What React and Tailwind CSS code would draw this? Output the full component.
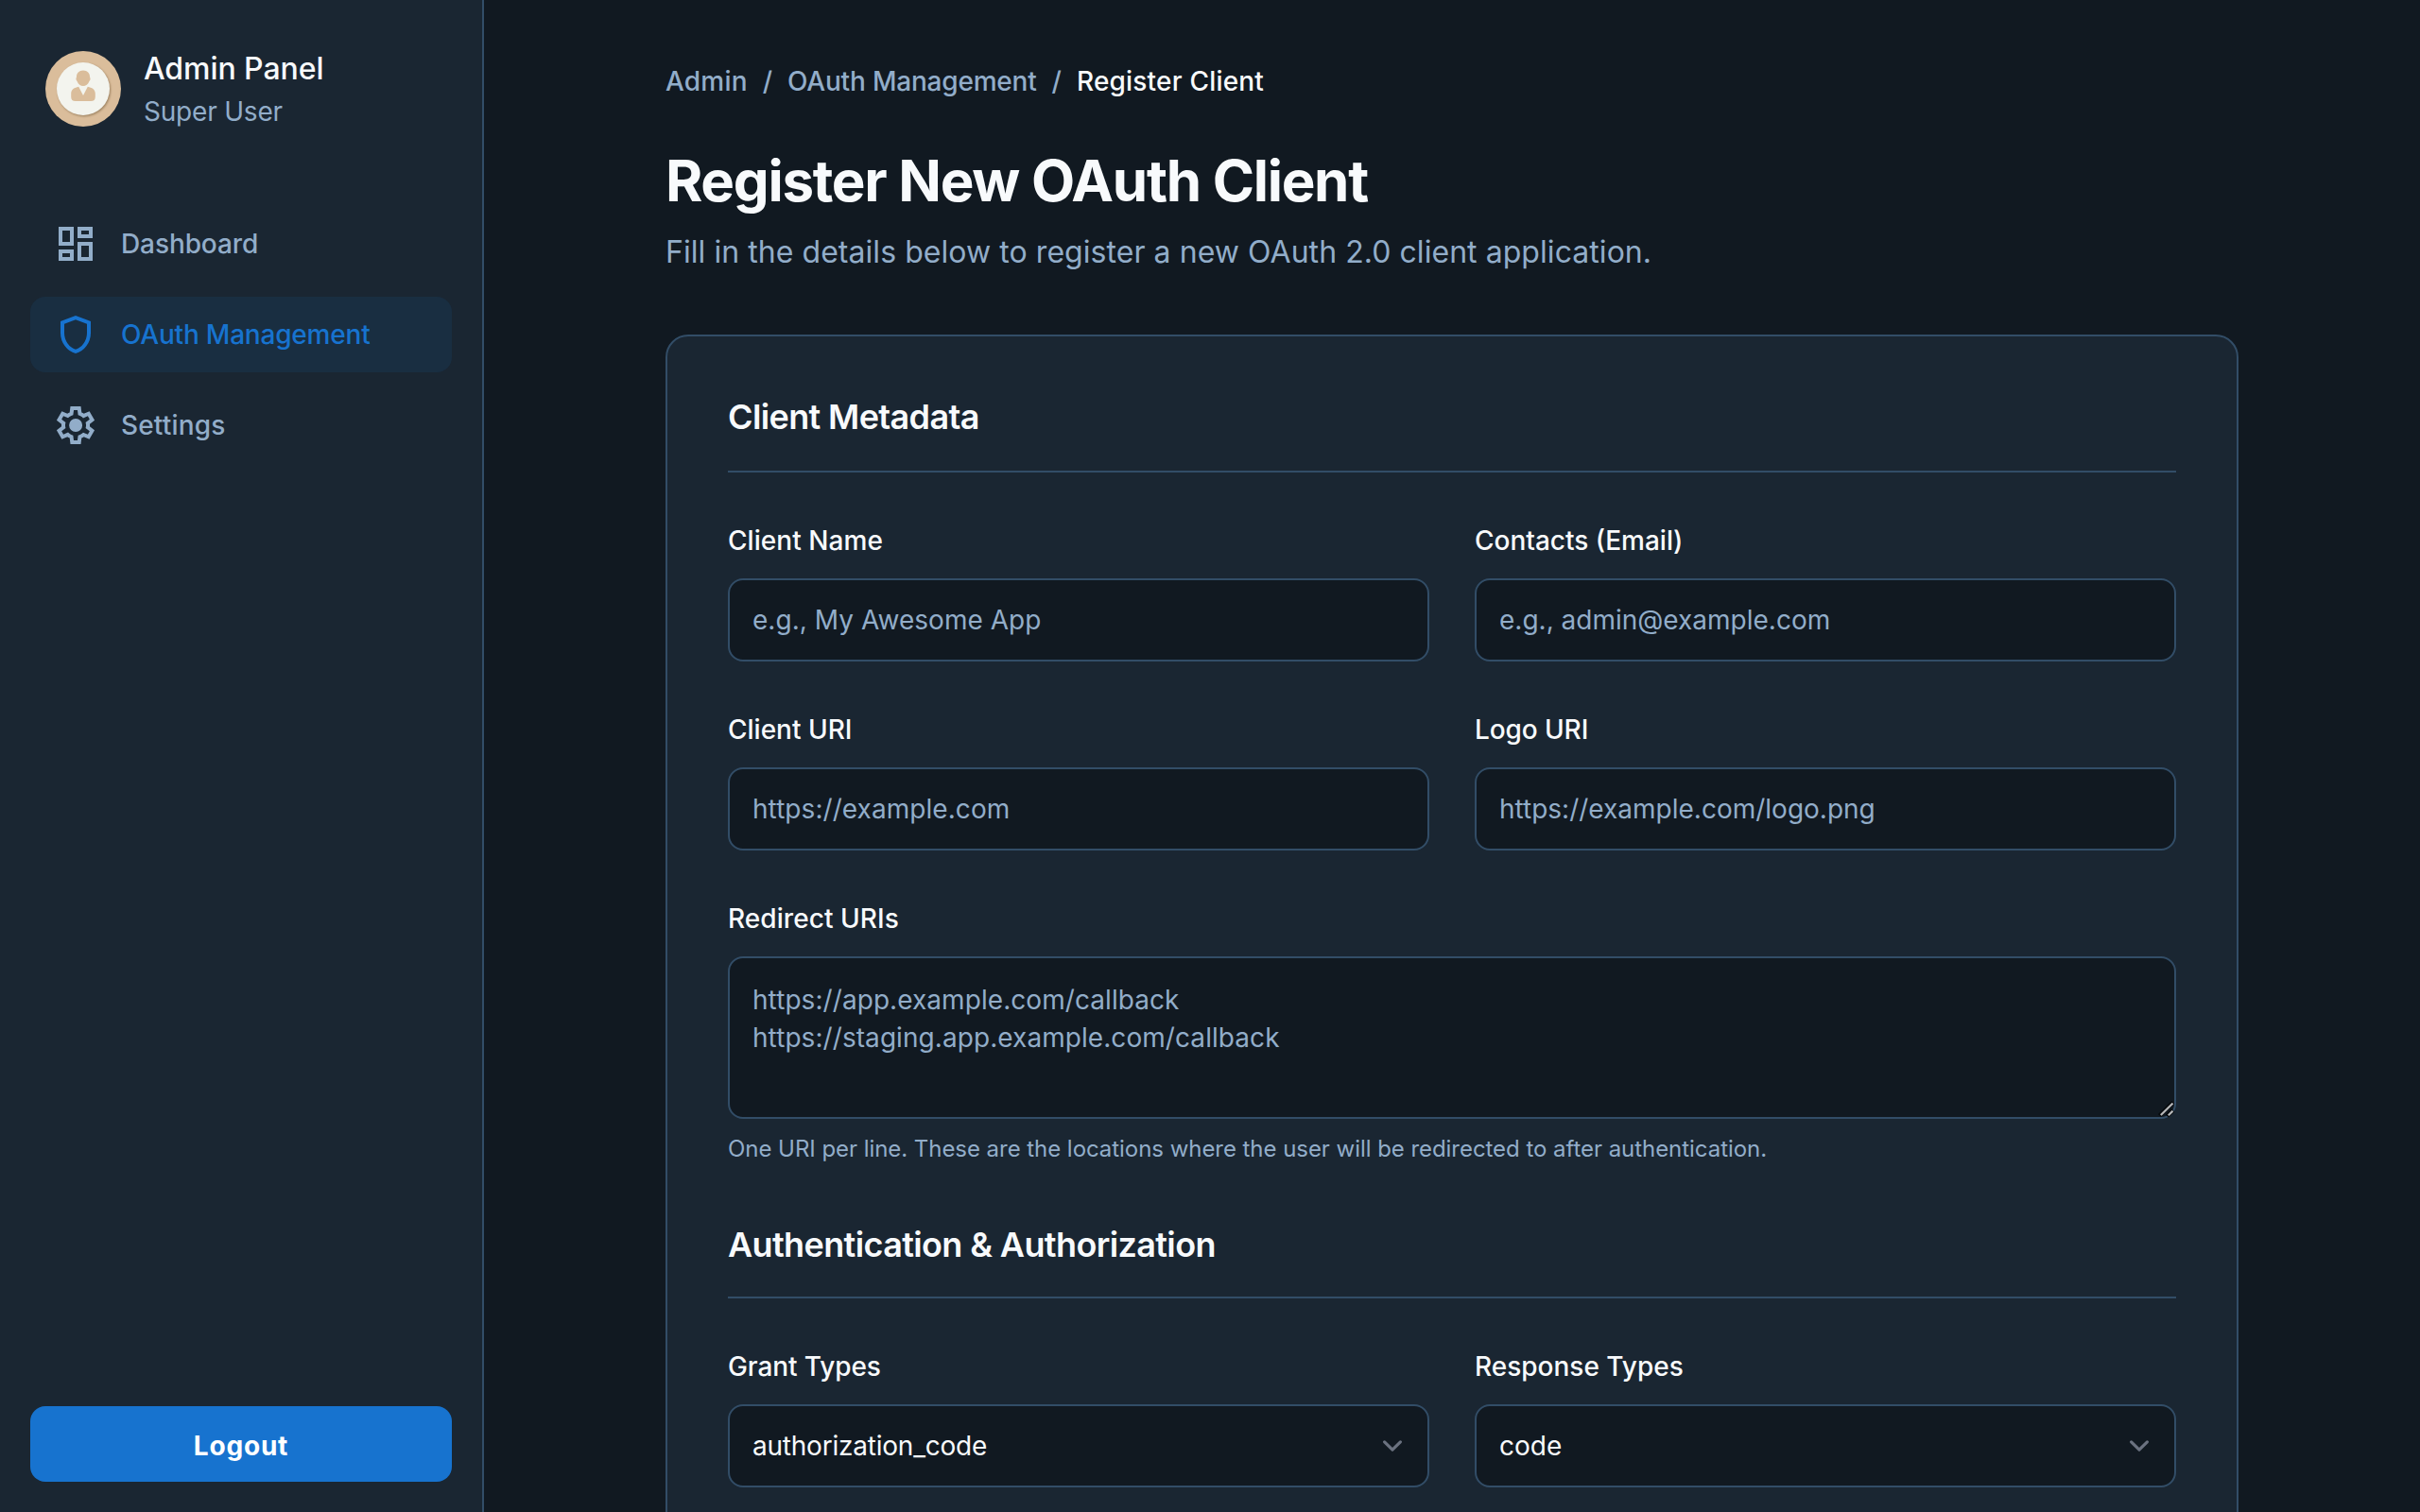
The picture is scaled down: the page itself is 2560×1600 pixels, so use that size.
const ICONS = {
  dashboard:
    'M19 5v2h-4V5h4M9 5v6H5V5h4m10 8v6h-4v-6h4M9 17v2H5v-2h4M21 3h-8v6h8V3zM11 3H3v10h8V3zm10 8h-8v10h8V11zm-10 4H3v6h8v-6z',
  shield:
    'M12 22q-3.475-.875-5.738-3.988T4 11.1V5l8-3 8 3v6.1q0 3.8-2.262 6.913T12 22zm0-2.1q2.6-.825 4.3-3.3t1.7-5.5V6.375l-6-2.25-6 2.25V11.1q0 3.025 1.7 5.5t4.3 3.3z',
  settings:
    'M9.25 22l-.4-3.2q-.325-.125-.612-.3t-.563-.375L4.7 19.375l-2.75-4.75 2.575-1.95Q4.5 12.5 4.5 12.338v-.675q0-.163.025-.338L1.95 9.375l2.75-4.75 2.975 1.25q.275-.2.575-.375t.6-.3l.4-3.2h5.5l.4 3.2q.325.125.613.3t.562.375l2.975-1.25 2.75 4.75-2.575 1.95q.025.175.025.338v.674q0 .163-.05.338l2.575 1.95-2.75 4.75-2.95-1.25q-.275.2-.575.375t-.6.3l-.4 3.2zm1.75-2h1.975l.35-2.65q.775-.2 1.438-.587t1.212-.938l2.475 1.025.975-1.7-2.15-1.625q.125-.35.175-.737T17.5 12t-.05-.787-.175-.738l2.15-1.625-.975-1.7-2.475 1.05q-.55-.575-1.212-.962t-1.438-.588L13 4h-1.975l-.35 2.65q-.775.2-1.437.588t-1.213.937L5.55 7.15l-.975 1.7 2.15 1.6q-.125.375-.175.75t-.05.8q0 .4.05.775t.175.75l-2.15 1.625.975 1.7 2.475-1.05q.55.575 1.213.963t1.437.587zm1.05-4.5q1.45 0 2.475-1.025T15.55 12t-1.025-2.475T12.05 8.5q-1.475 0-2.488 1.025T8.55 12t1.013 2.475T12.05 15.5z',
};

const field =
  'block w-full rounded-2xl border-2 border-[#324d67] bg-[#111921] px-6 text-[28px] text-[#f8fafc] placeholder:text-[#92adc9] placeholder:opacity-100 outline-none';

function NavItem({ icon, label, active, tracking }) {
  return (
    <a
      className={
        active
          ? 'flex h-20 items-center gap-6 rounded-2xl bg-[#1773cf]/10 px-6 text-[#1773cf]'
          : 'flex h-20 items-center gap-6 rounded-2xl px-6 text-[#92adc9]'
      }
    >
      <svg viewBox="0 0 24 24" className="size-12 shrink-0" fill="currentColor">
        <path d={ICONS[icon]} />
      </svg>
      <span className={`text-[28px] leading-[42px] font-medium ${tracking}`}>{label}</span>
    </a>
  );
}

function Avatar() {
  return (
    <svg viewBox="0 0 80 80" className="size-20 shrink-0">
      <defs>
        <filter id="soft" x="-20%" y="-20%" width="140%" height="140%">
          <feGaussianBlur stdDeviation="1" />
        </filter>
      </defs>
      <circle cx="40" cy="40" r="40" fill="#dabd9b" />
      <circle cx="41" cy="41.2" r="28" fill="#8f7553" opacity=".8" filter="url(#soft)" />
      <circle cx="40" cy="40" r="28" fill="#f3f4ee" />
      <path d="M40 20.500c4.500 0 7 3 7 6.500 0 1 .800 1.800.500 3-.200 1-.900 1.400-1.200 2.200-1 3-3.600 4.800-6.300 4.800s-5.300-1.800-6.300-4.800c-.300-.800-1-1.200-1.200-2.200-.300-1.200.500-2 .500-3 0-3.500 2.500-6.500 7-6.500z" fill="#dabd9b" />
      <path d="M35.200 37.700L40 47l4.800-9.300c4.500 1 8 2.800 8 7.300v3.500c0 3-1.600 4.500-4.600 4.500H31.800c-3 0-4.600-1.500-4.600-4.500V45c0-4.500 3.500-6.300 8-7.300z" fill="#dabd9b" />
    </svg>
  );
}

function Field({ label, tracking = '', children }) {
  return (
    <label className="flex flex-col gap-5">
      <span className={`text-[28px] leading-10 font-medium text-[#f8fafc] ${tracking}`}>{label}</span>
      {children}
    </label>
  );
}

function TextInput({ label, placeholder, tracking, inputTracking = '' }) {
  return (
    <Field label={label} tracking={tracking}>
      <input className={`${field} h-[88px] ${inputTracking}`} placeholder={placeholder} />
    </Field>
  );
}

function SelectInput({ label, value, tracking, valueTracking = '' }) {
  return (
    <Field label={label} tracking={tracking}>
      <div className={`${field} flex h-[88px] items-center justify-between`}>
        <span className={valueTracking}>{value}</span>
        <svg viewBox="0 0 20 20" className="-mr-2 size-[42px]" fill="none" stroke="#6b7280" strokeWidth="1.5" strokeLinecap="round" strokeLinejoin="round">
          <path d="M6 8l4 4 4-4" />
        </svg>
      </div>
    </Field>
  );
}

function SectionTitle({ className, children }) {
  return (
    <h2 className={`border-b-2 border-[#324d67] text-[36px] font-semibold tracking-[-0.63px] text-[#f8fafc] ${className}`}>
      {children}
    </h2>
  );
}

export default function App() {
  return (
    <div className="flex h-[1600px] w-[2560px] overflow-hidden bg-[#111921] font-['Inter',sans-serif] [font-optical-sizing:none]">
      <aside className="flex w-[512px] shrink-0 flex-col border-r-2 border-[#324d67] bg-[#1a2632] p-8">
        <div className="flex h-[124px] items-center gap-6 px-4">
          <Avatar />
          <div className="flex flex-col">
            <h1 className="text-[32px] leading-[48px] font-medium tracking-[-0.07px] text-[#f8fafc]">Admin Panel</h1>
            <p className="text-[28px] leading-[42px] tracking-[-0.2px] text-[#92adc9]">Super User</p>
          </div>
        </div>
        <nav className="mt-[62px] flex flex-col gap-4">
          <NavItem icon="dashboard" label="Dashboard" tracking="tracking-[-0.1px]" />
          <NavItem icon="shield" label="OAuth Management" tracking="tracking-[-0.2px]" active />
          <NavItem icon="settings" label="Settings" tracking="tracking-[0.16px]" />
        </nav>
        <button className="mt-auto h-20 rounded-2xl bg-[#1773cf] pt-1 text-[28px] font-bold tracking-[0.8px] text-white">
          Logout
        </button>
      </aside>

      <main className="flex-1 overflow-hidden">
        <div className="mx-auto w-[1664px] pt-[65px]">
          <div className="flex gap-4 text-[28px] leading-[42px] font-medium text-[#92adc9]">
            <span className="tracking-[0.2px]">Admin</span>
            <span>/</span>
            <span className="tracking-[-0.2px]">OAuth Management</span>
            <span>/</span>
            <span className="tracking-[0.2px] text-[#f8fafc]">Register Client</span>
          </div>
          <h1 className="mt-[47px] text-[60px] leading-[75px] font-bold tracking-[-1.3px] text-[#f8fafc]">
            Register New OAuth Client
          </h1>
          <p className="mt-[14px] text-[32px] leading-[48px] tracking-[0.055px] text-[#92adc9]">
            Fill in the details below to register a new OAuth 2.0 client application.
          </p>

          <form className="mt-[63px] h-[1500px] rounded-3xl border-2 border-[#324d67] bg-[#1a2632] p-16">
            <SectionTitle className="pb-9 leading-[42px]">Client Metadata</SectionTitle>
            <div className="mt-[52px] grid grid-cols-2 gap-x-12 gap-y-[52px]">
              <TextInput label="Client Name" placeholder="e.g., My Awesome App" tracking="tracking-[0.05px]" inputTracking="tracking-[0.04px]" />
              <TextInput label="Contacts (Email)" placeholder="e.g., admin@example.com" />
              <TextInput label="Client URI" placeholder="https://example.com" inputTracking="tracking-[0.06px]" />
              <TextInput label="Logo URI" placeholder="https://example.com/logo.png" tracking="tracking-[-0.1px]" />
              <div className="col-span-2">
                <Field label="Redirect URIs" tracking="tracking-[0.06px]">
                  <div className="relative">
                    <textarea
                      className={`${field} h-[172px] resize-none overflow-hidden py-6 leading-10 tracking-[0.065px]`}
                      placeholder={'https://app.example.com/callback\nhttps://staging.app.example.com/callback'}
                    />
                    <svg viewBox="0 0 20 20" className="absolute right-0.5 bottom-0.5 size-5" fill="none">
                      <path d="M4.500 18.500L18.800 4.500M12.500 19L18.800 13" stroke="#06090c" strokeWidth="4.500" />
                      <path d="M5.800 18L18.500 5.500M13.800 18.200L18.500 13.600" stroke="#b5b7b9" strokeWidth="2.200" />
                    </svg>
                  </div>
                </Field>
                <p className="mt-4 text-[24px] leading-8 tracking-[-0.049px] text-[#92adc9]">
                  One URI per line. These are the locations where the user will be redirected to after authentication.
                </p>
              </div>
            </div>
            <div className="mt-[62px]">
              <SectionTitle className="pb-8 leading-[46px]">Authentication &amp; Authorization</SectionTitle>
              <div className="mt-[52px] grid grid-cols-2 gap-x-12">
                <SelectInput label="Grant Types" value="authorization_code" tracking="tracking-[-0.1px]" valueTracking="tracking-[-0.22px]" />
                <SelectInput label="Response Types" value="code" />
              </div>
            </div>
          </form>
        </div>
      </main>
    </div>
  );
}
